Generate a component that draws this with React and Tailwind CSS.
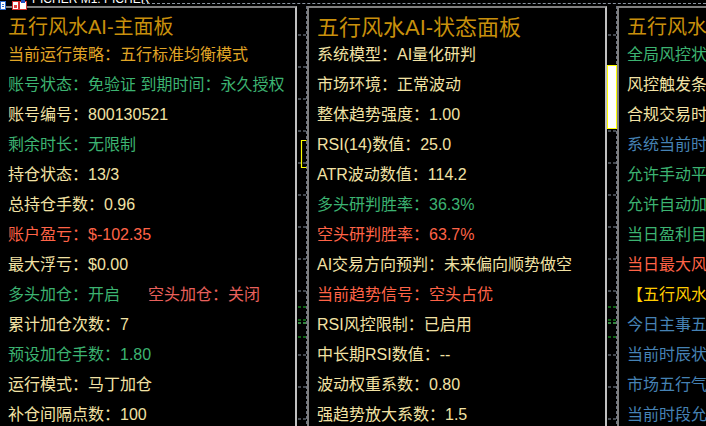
import React from "react";

const C = {
  title: "text-[#c8900c]",
  gold: "text-[#e0a526]",
  green: "text-[#3cb371]",
  cream: "text-[#f2e2a4]",
  red: "text-[#ff6347]",
  red2: "text-[#e8605c]",
  blue: "text-[#4682b4]",
  yellow: "text-[#ffcc00]",
};

const FONT = { fontFamily: '"Liberation Sans", "Noto Sans CJK SC", sans-serif' };

function Row({ color, children }) {
  return (
    <div className={`h-[30px] leading-[30px] whitespace-nowrap text-[16px] ${color}`}>{children}</div>
  );
}

function Title({ size, children }) {
  return (
    <div className={`h-[25px] leading-[25px] whitespace-nowrap ${size} ${C.title}`}>{children}</div>
  );
}

function GapCanvas({ variant }) {
  const ticks = [];
  for (let y = 29; y < 426; y += 32) ticks.push(y);
  return (
    <svg width="10" height="420" viewBox="0 0 10 420" className="block">
      <line x1="9.5" y1="0" x2="9.5" y2="420" stroke="#6b7280" strokeWidth="1" strokeDasharray="3 2" />
      {ticks.map((y) => (
        <g key={y}>
          <line x1="1" y1={y} x2="4" y2={y} stroke="#8a94a0" strokeWidth="1" />
          <line x1="6" y1={y} x2="9" y2={y} stroke="#8a94a0" strokeWidth="1" />
        </g>
      ))}
      {[301, 314, 317, 331].map((y) => (
        <g key={"g" + y}>
          <line x1="1" y1={y} x2="4" y2={y} stroke="#22c02a" strokeWidth="1" />
          <line x1="6" y1={y} x2="9" y2={y} stroke="#22c02a" strokeWidth="1" />
        </g>
      ))}
      {variant === 1 ? (
        <path d="M9.5 134.5 H4.5 V161.5 H9.5" fill="none" stroke="#ffff00" strokeWidth="1.2" />
      ) : (
        <rect x="0.5" y="59.5" width="9" height="63" fill="#ffffff" stroke="#ffff00" strokeWidth="1" />
      )}
    </svg>
  );
}

export default function App() {
  return (
    <div className="w-[706px] h-[426px] bg-black overflow-hidden relative flex flex-col" style={FONT}>
      {/* top strip */}
      <div className="h-[6px] shrink-0 relative overflow-hidden flex">
        <div className="w-[32px] shrink-0" />
        <div className="text-[12px] leading-[12px] text-white whitespace-nowrap -mt-[7px] w-[110px] shrink-0">PICHER M1: PICHER</div>
        <div className="flex-1 border-t border-dashed border-[#8a94a0] mt-[3px]" />
      </div>
      {/* overlay icons */}
      <div className="absolute left-0 top-[1px] w-[6px] h-[9px] border border-[#2f6fd0] bg-white flex flex-col justify-center gap-[1px] px-[1px]">
        <div className="h-[1px] bg-[#2f6fd0]" />
        <div className="h-[1px] bg-[#2f6fd0]" />
      </div>
      <svg className="absolute left-[12px] top-0" width="15" height="10" viewBox="0 0 15 10">
        <rect x="0.5" y="1.5" width="6" height="8" fill="#ffffff" stroke="#d03030" />
        <rect x="7.5" y="1.5" width="7" height="8" fill="#ffffff" stroke="#d03030" />
        <rect x="9" y="0" width="4" height="3" fill="#2050c0" />
        <rect x="2" y="5" width="3" height="3" fill="#e04040" />
      </svg>

      <div className="flex-1 flex min-h-0">
        {/* panel 1 */}
        <div className="w-[297px] shrink-0 border-t-2 border-t-[#808080] border-r-2 border-r-[#c0c0c0] pl-[8px] pt-[7px] overflow-hidden">
          <Title size="text-[20px]">五行风水AI-主面板</Title>
          <Row color={C.gold}>当前运行策略：五行标准均衡模式</Row>
          <Row color={C.green}>账号状态：免验证 到期时间：永久授权</Row>
          <Row color={C.cream}>账号编号：800130521</Row>
          <Row color={C.green}>剩余时长：无限制</Row>
          <Row color={C.cream}>持仓状态：13/3</Row>
          <Row color={C.cream}>总持仓手数：0.96</Row>
          <Row color={C.red}>账户盈亏：$-102.35</Row>
          <Row color={C.cream}>最大浮亏：$0.00</Row>
          <Row color={C.green}>
            多头加仓：开启<span className={`ml-[28px] ${C.red2}`}>空头加仓：关闭</span>
          </Row>
          <Row color={C.cream}>累计加仓次数：7</Row>
          <Row color={C.green}>预设加仓手数：1.80</Row>
          <Row color={C.cream}>运行模式：马丁加仓</Row>
          <Row color={C.cream}>补仓间隔点数：100</Row>
        </div>

        <div className="w-[10px] shrink-0">
          <GapCanvas variant={1} />
        </div>

        {/* panel 2 */}
        <div className="w-[300px] shrink-0 border-t-2 border-t-[#808080] border-l-2 border-l-[#808080] border-r-2 border-r-[#c0c0c0] pl-[8px] pt-[7px] overflow-hidden">
          <Title size="text-[22px]">五行风水AI-状态面板</Title>
          <Row color={C.cream}>系统模型：AI量化研判</Row>
          <Row color={C.cream}>市场环境：正常波动</Row>
          <Row color={C.cream}>整体趋势强度：1.00</Row>
          <Row color={C.cream}>RSI(14)数值：25.0</Row>
          <Row color={C.cream}>ATR波动数值：114.2</Row>
          <Row color={C.green}>多头研判胜率：36.3%</Row>
          <Row color={C.red}>空头研判胜率：63.7%</Row>
          <Row color={C.cream}>AI交易方向预判：未来偏向顺势做空</Row>
          <Row color={C.red}>当前趋势信号：空头占优</Row>
          <Row color={C.cream}>RSI风控限制：已启用</Row>
          <Row color={C.cream}>中长期RSI数值：--</Row>
          <Row color={C.cream}>波动权重系数：0.80</Row>
          <Row color={C.cream}>强趋势放大系数：1.5</Row>
        </div>

        <div className="w-[10px] shrink-0">
          <GapCanvas variant={2} />
        </div>

        {/* panel 3 */}
        <div className="flex-1 min-w-0 border-t-2 border-t-[#808080] border-l-2 border-l-[#808080] pl-[8px] pt-[7px] overflow-hidden">
          <Title size="text-[20px]">五行风水AI-风控面板</Title>
          <Row color={C.green}>全局风控状态：正常</Row>
          <Row color={C.cream}>风控触发条件：未触发</Row>
          <Row color={C.cream}>合规交易时段：是</Row>
          <Row color={C.blue}>系统当前时间：12:00</Row>
          <Row color={C.green}>允许手动平仓：是</Row>
          <Row color={C.green}>允许自动加仓：是</Row>
          <Row color={C.green}>当日盈利目标：未达成</Row>
          <Row color={C.red}>当日最大风险：未触发</Row>
          <Row color={C.yellow}>
            <span className="text-[#ffd000]">【</span>五行风水AI】
          </Row>
          <Row color={C.blue}>今日主事五行：金</Row>
          <Row color={C.blue}>当前时辰状态：吉</Row>
          <Row color={C.blue}>市场五行气场：平</Row>
          <Row color={C.blue}>当前时段允许交易</Row>
        </div>
      </div>
    </div>
  );
}
